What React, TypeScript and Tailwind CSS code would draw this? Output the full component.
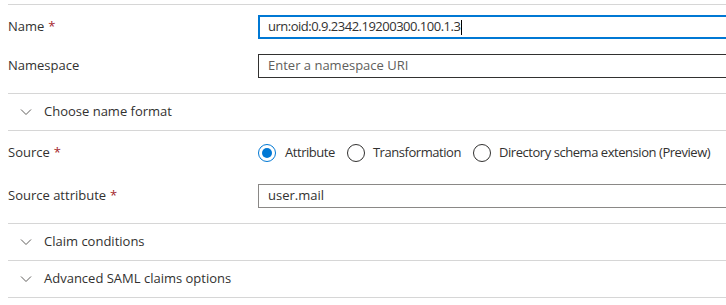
import React from "react";

const font = { fontFamily: '"Open Sans", "Noto Sans", sans-serif' };

function Chevron() {
  return (
    <svg width="12" height="8" viewBox="0 0 12 8" className="shrink-0">
      <path d="M1 1.5 L6 6.5 L11 1.5" fill="none" stroke="#605e5c" strokeWidth="1" />
    </svg>
  );
}

function Radio({ checked }: { checked?: boolean }) {
  return (
    <span
      className={
        "flex h-[18px] w-[18px] shrink-0 items-center justify-center rounded-full border " +
        (checked ? "border-[#0078d4]" : "border-[#323130]")
      }
    >
      {checked && <span className="h-[10px] w-[10px] rounded-full bg-[#0078d4]" />}
    </span>
  );
}

function Label({ text, required }: { text: string; required?: boolean }) {
  return (
    <div className="w-[250px] shrink-0 text-[13px] text-[#323130]">
      {text}
      {required && <span className="ml-1 text-[#a4262c]">*</span>}
    </div>
  );
}

function Collapsible({ text }: { text: string }) {
  return (
    <div className="flex h-[37px] items-center border-b border-[#d6d6d6] pl-[12px]">
      <Chevron />
      <span className="ml-[12px] text-[13px] text-[#323130]">{text}</span>
    </div>
  );
}

export default function App() {
  return (
    <div className="min-h-[305px] w-[726px] overflow-hidden bg-white pt-[4px] pl-[8px]" style={font}>
      <div className="border-t border-b border-[#d6d6d6]">
        <div className="flex flex-col gap-[15px] pt-[10px] pb-[15px]">
          <div className="flex items-center">
            <Label text="Name" required />
            <div className="flex h-[24px] w-[500px] shrink-0 items-center whitespace-nowrap border-2 border-[#0078d4] pl-[8px] text-[13px] tracking-[-0.5px] text-[#323130]">
              urn:oid:0.9.2342.19200300.100.1.3
              <span className="ml-[1px] h-[15px] w-[1px] bg-black" />
            </div>
          </div>
          <div className="flex items-center">
            <Label text="Namespace" />
            <div className="flex h-[24px] w-[500px] shrink-0 items-center whitespace-nowrap border border-[#323130] pl-[9px] text-[13px] text-[#605e5c]">
              Enter a namespace URI
            </div>
          </div>
        </div>
      </div>
      <Collapsible text="Choose name format" />
      <div className="flex flex-col border-b border-[#d6d6d6] pt-[13px] pb-[15px]">
        <div className="flex h-[18px] items-center">
          <Label text="Source" required />
          <div className="flex shrink-0 items-center whitespace-nowrap text-[13px] tracking-[-0.45px] text-[#323130]">
            <Radio checked />
            <span className="ml-[9px]">Attribute</span>
            <span className="ml-[12px]"><Radio /></span>
            <span className="ml-[8px]">Transformation</span>
            <span className="ml-[12px]"><Radio /></span>
            <span className="ml-[8px]">Directory schema extension (Preview)</span>
          </div>
        </div>
        <div className="mt-[22px] flex items-center">
          <Label text="Source attribute" required />
          <div className="flex h-[24px] w-[500px] shrink-0 items-center whitespace-nowrap border border-[#8a8886] pl-[9px] text-[13px] text-[#323130]">
            user.mail
          </div>
        </div>
      </div>
      <Collapsible text="Claim conditions" />
      <Collapsible text="Advanced SAML claims options" />
    </div>
  );
}
